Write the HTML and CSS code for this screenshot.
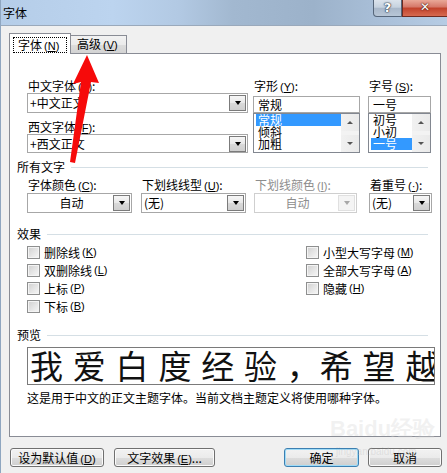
FILE: index.html
```html
<!DOCTYPE html>
<html lang="zh">
<head>
<meta charset="utf-8">
<title>字体</title>
<link rel="stylesheet" href="styles.css">
</head>
<body>
<div class="window">
  <div class="titlebar">
    <span class="title">字体</span>
    <div class="caption-btns">
      <div class="cbtn help">?</div>
      <div class="cbtn close">✕</div>
    </div>
  </div>
  <div class="client">
    <div class="tabs">
      <div class="tab active"><span class="focus">字体<span class="acc">(<u>N</u>)</span></span></div>
      <div class="tab inactive">高级<span class="acc">(<u>V</u>)</span></div>
    </div>
    <div class="panel">
      <div class="fontsec">
        <div class="col">
          <div class="lbl">中文字体<span class="acc">(<u>T</u>)</span>:</div>
          <div class="combo"><span class="val">+中文正文</span><span class="ddb"><i class="tri"></i></span></div>
          <div class="lbl l2">西文字体<span class="acc">(<u>F</u>)</span>:</div>
          <div class="combo c19"><span class="val">+西文正文</span><span class="ddb"><i class="tri"></i></span></div>
        </div>
        <div class="col">
          <div class="lbl">字形<span class="acc">(<u>Y</u>)</span>:</div>
          <div class="edit">常规</div>
          <div class="list">
            <div class="items">
              <div class="item sel">常规</div>
              <div class="item">倾斜</div>
              <div class="item">加粗</div>
            </div>
            <div class="vscroll"><span class="sb up"><i class="tu"></i></span><span class="sb dn"><i class="td"></i></span></div>
          </div>
        </div>
        <div class="col">
          <div class="lbl">字号<span class="acc">(<u>S</u>)</span>:</div>
          <div class="edit">一号</div>
          <div class="list">
            <div class="items">
              <div class="item">初号</div>
              <div class="item">小初</div>
              <div class="item sel">一号</div>
            </div>
            <div class="vscroll"><span class="sb up"><i class="tu"></i></span><span class="sb dn"><i class="td"></i></span></div>
          </div>
        </div>
      </div>

      <div class="group"><span>所有文字</span><i class="rule"></i></div>
      <div class="colorrow">
        <div class="col">
          <div class="lbl">字体颜色<span class="acc">(<u>C</u>)</span>:</div>
          <div class="combo c20"><span class="val center">自动</span><span class="ddb"><i class="tri"></i></span></div>
        </div>
        <div class="col">
          <div class="lbl">下划线线型<span class="acc">(<u>U</u>)</span>:</div>
          <div class="combo c20"><span class="val">(无)</span><span class="ddb"><i class="tri"></i></span></div>
        </div>
        <div class="col">
          <div class="lbl dis">下划线颜色<span class="acc">(<u>I</u>)</span>:</div>
          <div class="combo c20 disabled"><span class="val center">自动</span><span class="ddb"><i class="tri"></i></span></div>
        </div>
        <div class="col">
          <div class="lbl">着重号<span class="acc">(<u>·</u>)</span>:</div>
          <div class="combo c20"><span class="val">(无)</span><span class="ddb"><i class="tri"></i></span></div>
        </div>
      </div>

      <div class="group g2"><span>效果</span><i class="rule"></i></div>
      <div class="effects">
        <div class="ecol">
          <div class="chk"><i class="box"></i>删除线<span class="acc">(<u>K</u>)</span></div>
          <div class="chk"><i class="box"></i>双删除线<span class="acc">(<u>L</u>)</span></div>
          <div class="chk"><i class="box"></i>上标<span class="acc">(<u>P</u>)</span></div>
          <div class="chk"><i class="box"></i>下标<span class="acc">(<u>B</u>)</span></div>
        </div>
        <div class="ecol">
          <div class="chk"><i class="box"></i>小型大写字母<span class="acc">(<u>M</u>)</span></div>
          <div class="chk"><i class="box"></i>全部大写字母<span class="acc">(<u>A</u>)</span></div>
          <div class="chk"><i class="box"></i>隐藏<span class="acc">(<u>H</u>)</span></div>
        </div>
      </div>

      <div class="group g3"><span>预览</span><i class="rule"></i></div>
      <div class="preview"><span class="ptext">我爱白度经验<span class="comma">，</span>希望越来越好</span></div>
      <div class="caption">这是用于中文的正文主题字体。当前文档主题定义将使用哪种字体。</div>
    </div>

    <div class="btnrow">
      <div class="btn b1">设为默认值<span class="acc">(<u>D</u>)</span></div>
      <div class="btn b2">文字效果<span class="acc">(<u>E</u>)</span>...</div>
      <div class="btn b3 default">确定</div>
      <div class="btn b4">取消</div>
    </div>
  </div>
</div>

<div class="watermark">
  <span class="wm-logo">Bai<b>du</b>经验</span>
  <span class="wm-url">jingyan.baidu.com</span>
</div>

<svg class="arrow" width="447" height="473" viewBox="0 0 447 473" xmlns="http://www.w3.org/2000/svg">
  <polygon points="87,55 99,83 91,82 75,163 70,162 81,82 73,84" fill="#f60a0a"/>
</svg>
</body>
</html>
```

FILE: styles.css
```css
* { box-sizing: border-box; }
html, body { margin: 0; padding: 0; }
body {
  width: 447px;
  height: 473px;
  overflow: hidden;
  position: relative;
  background: #f0f0f0;
  color: #000;
  font-family: "Noto Sans CJK SC", "DejaVu Sans", sans-serif;
  font-size: 12px;
}
.window {
  height: 473px;
  display: flex;
  flex-direction: column;
  border-left: 1px solid #8fa6c0;
}
.titlebar {
  height: 25px;
  display: flex;
  align-items: flex-start;
  background: linear-gradient(90deg, #b5cde8 0%, #bcd4ef 25%, #b2c9e3 40%, #a2b8d0 52%, #9cb2ca 70%, #a9bfd8 85%, #b6cce4 100%);
}
.title {
  padding-left: 2px;
  padding-top: 1px;
  line-height: 24px;
}
.caption-btns {
  margin-left: auto;
  display: flex;
}
.cbtn {
  height: 17px;
  color: #fff;
  text-align: center;
  font-family: "DejaVu Sans", sans-serif;
  font-weight: bold;
  line-height: 15px;
}
.help {
  width: 29px;
  border: 1px solid #56667a;
  border-top: none;
  border-radius: 0 0 0 4px;
  background: linear-gradient(#dbe3ec 0%, #c6d2df 45%, #a9b8ca 52%, #b8c6d6 100%);
  font-size: 13px;
  text-shadow: 0 0 1px #2b3848, 0 0 1px #2b3848, 0 0 2px #2b3848;
}
.close {
  width: 45px;
  border-bottom: 1px solid #6e2a20;
  border-left: 1px solid #6e2a20;
  background: linear-gradient(#e9a898 0%, #d6796a 42%, #c2432c 52%, #d66a50 100%);
  font-size: 12px;
  text-shadow: 0 0 1px #451008, 0 0 2px #451008;
}

.client {
  flex: 1;
  display: flex;
  flex-direction: column;
  border-top: 1px solid #9aa9bb;
  padding: 7px 5px 0 8px;
}
.acc {
  font-family: "Liberation Sans", sans-serif;
  font-size: 11px;
  margin-left: 2px;
}
.acc u { text-decoration: underline; }

/* tabs */
.tabs {
  display: flex;
  align-items: flex-end;
  height: 21px;
  margin-bottom: -1px;
  position: relative;
  z-index: 1;
}
.tab {
  border: 1px solid #898c95;
  border-bottom: none;
}
.tab.active {
  width: 62px;
  height: 21px;
  background: #fff;
  padding: 3px 0 0 3px;
}
.focus {
  display: block;
  width: 54px;
  height: 16px;
  border: 1px dotted #000;
  padding-left: 4px;
  line-height: 14px;
}
.tab.inactive {
  width: 57px;
  height: 18px;
  margin-left: -1px;
  margin-bottom: 1px;
  padding-left: 6px;
  line-height: 16px;
  background: linear-gradient(#f2f2f2 0%, #ebebeb 50%, #dddddd 51%, #d3d3d3 100%);
}

/* panel */
.panel {
  width: 432px;
  height: 384px;
  border: 1px solid #898c95;
  background: #fff;
  padding: 25px 6px 0 7px;
}
.lbl {
  height: 14px;
  line-height: 14px;
  padding-left: 1px;
  white-space: nowrap;
}
.lbl.dis { color: #8d8d8d; }
.fontsec {
  margin-left: 10px;
  display: grid;
  grid-template-columns: 221px 107px 66px;
  column-gap: 5px;
}
.fontsec .col:nth-child(3) { margin-left: 3px; }
.fontsec .l2 { margin-top: 7px; }

.combo {
  height: 20px;
  border: 1px solid #a7a7a7;
  background: #fff;
  display: flex;
  align-items: center;
  padding: 1px;
}
.combo.c19 { height: 19px; }
.combo .val {
  flex: 1;
  padding-left: 1px;
  line-height: 16px;
  white-space: nowrap;
  overflow: hidden;
}
.combo .val.center { text-align: center; }
.ddb {
  width: 17px;
  height: 16px;
  border: 1px solid #7b7b7b;
  background: linear-gradient(#f6f6f6 0%, #e8e8e8 50%, #d9d9d9 51%, #cfcfcf 100%);
  display: flex;
  align-items: center;
  justify-content: center;
}
.tri {
  width: 0;
  height: 0;
  border-left: 3.5px solid transparent;
  border-right: 3.5px solid transparent;
  border-top: 4px solid #000;
}
.combo.disabled { border-color: #cfcfcf; color: #8d8d8d; }
.combo.disabled .ddb { border-color: #e0e0e0; background: #f4f4f4; }
.combo.disabled .tri { border-top-color: #a8a8a8; }

.edit {
  height: 17px;
  margin-top: 3px;
  border: 1px solid #a7a7a7;
  padding-left: 4px;
  line-height: 15px;
}
.list {
  height: 40px;
  border: 1px solid #828790;
  display: flex;
  overflow: hidden;
}
.items {
  flex: 1;
  padding: 0 0 0 2px;
}
.item {
  height: 12px;
  line-height: 12px;
  padding-left: 2px;
  white-space: nowrap;
}
.item.sel { background: #3399ff; color: #fff; }
.vscroll {
  width: 18px;
  background: #f3f3f3;
  display: flex;
  flex-direction: column;
  justify-content: space-between;
}
.sb {
  height: 17px;
  display: flex;
  align-items: center;
  justify-content: center;
  background: linear-gradient(90deg, #f1f1f1, #eaeaea);
}
.tu, .td {
  width: 0; height: 0;
  border-left: 3px solid transparent;
  border-right: 3px solid transparent;
}
.tu { border-bottom: 3px solid #555; }
.td { border-top: 3px solid #555; }

/* group headers */
.group {
  display: flex;
  align-items: center;
  height: 14px;
  line-height: 14px;
  margin-top: 7px;
  margin-right: 6px;
}
.group .rule {
  flex: 1;
  height: 1px;
  background: #d5dfe5;
  margin-left: 6px;
}
.group.g2 { margin-top: 14px; }
.group.g3 { margin-top: 13px; }

.colorrow {
  margin-top: 4px;
  margin-left: 10px;
  display: grid;
  grid-template-columns: 105px 105px 102px 66px;
  column-gap: 9px;
}
.colorrow .col:nth-child(3) { margin-left: -1px; }
.colorrow .col:nth-child(4) { margin-left: 3px; }
.colorrow .combo { margin-top: 1px; }

/* effects */
.effects {
  margin-top: 2px;
  margin-left: 10px;
  display: grid;
  grid-template-columns: 279px auto;
}
.chk {
  height: 18px;
  display: flex;
  align-items: center;
  white-space: nowrap;
}
.box {
  width: 13px;
  height: 13px;
  margin-right: 4px;
  border: 1px solid #8e8f8f;
  box-shadow: inset 0 0 0 1px #f4f4f4;
  background: linear-gradient(135deg, #cfcfcf 0%, #e4e4e4 50%, #f7f7f7 100%);
}

/* preview */
.preview {
  margin-top: 5px;
  margin-left: 10px;
  width: 408px;
  height: 38px;
  border: 1px solid #7a7a7a;
  overflow: hidden;
  white-space: nowrap;
  padding-left: 2px;
}
.ptext {
  font-size: 33px;
  line-height: 35px;
  letter-spacing: 9.8px;
  color: #111;
  display: block;
}
.ptext .comma { letter-spacing: 0; }
.caption {
  margin-top: 6px;
  margin-left: 10px;
  line-height: 14px;
  white-space: nowrap;
}

/* buttons */
.btnrow {
  display: flex;
  margin-top: 11px;
  padding-left: 1px;
}
.btn {
  height: 19px;
  border: 1px solid #707070;
  border-radius: 3px;
  box-shadow: inset 0 0 0 1px #fbfbfb;
  background: linear-gradient(#f2f2f2 0%, #ebebeb 50%, #dddddd 51%, #cfcfcf 100%);
  text-align: center;
  line-height: 17px;
  white-space: nowrap;
}
.b1 { width: 94px; }
.b2 { width: 101px; margin-left: 10px; }
.b3 { width: 75px; margin-left: auto; }
.b4 { width: 74px; margin-left: 9px; }
.btn.default {
  border-color: #3c7fb1;
  box-shadow: inset 0 0 0 1px #9fdcf8;
}

/* overlays */
.watermark {
  position: absolute;
  left: 330px;
  top: 416px;
  display: flex;
  flex-direction: column;
  pointer-events: none;
}
.wm-logo {
  font-family: "Liberation Sans", sans-serif;
  font-size: 22px;
  font-weight: bold;
  color: rgba(215, 215, 215, 0.35);
  line-height: 26px;
}
.wm-logo b { font-weight: bold; }
.wm-url {
  font-family: "Liberation Sans", sans-serif;
  font-size: 10px;
  color: rgba(190, 190, 190, 0.35);
  margin-top: 4px;
  margin-left: 6px;
}
.arrow {
  position: absolute;
  left: 0;
  top: 0;
  pointer-events: none;
}
```
